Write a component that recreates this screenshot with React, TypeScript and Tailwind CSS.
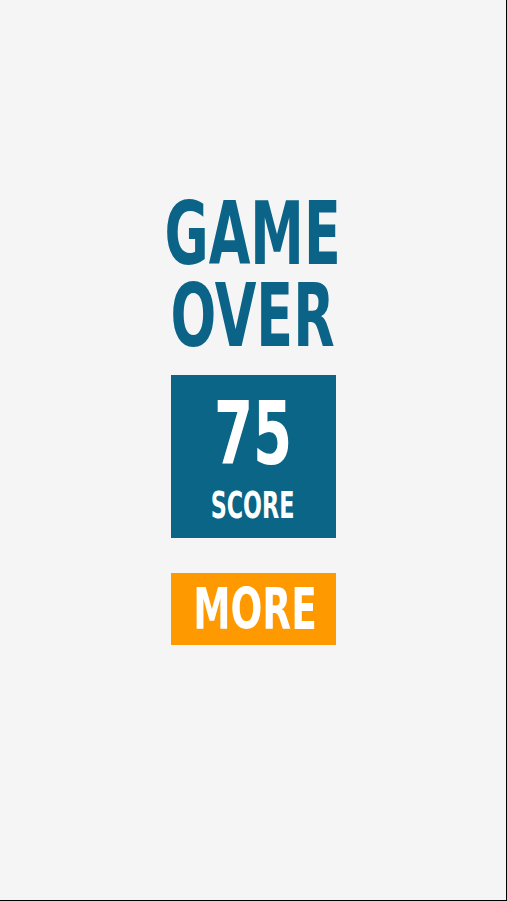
export default function App() {
  return (
    <div className="flex h-[901px] w-[507px] flex-col items-center border-r border-b border-black bg-[#f5f5f5] pt-[193px] font-['DejaVu_Sans_Condensed','DejaVu_Sans',sans-serif] font-bold">
      <h1 className="text-center text-[88px] leading-[82px] text-[#0b6487]">
        <div className="scale-x-[0.68]">GAME</div>
        <div className="scale-x-[0.68]">OVER</div>
      </h1>
      <div className="mt-[18px] flex h-[163px] w-[165px] flex-col items-center bg-[#0a6587] text-white">
        <div className="mt-[14px] scale-x-[0.71] text-[88px] leading-[90px]">75</div>
        <div className="mt-[7px] scale-x-[0.67] text-[37px] leading-[40px]">SCORE</div>
      </div>
      <button className="mt-[35px] h-[72px] w-[165px] bg-[#ff9900] text-white">
        <span className="block scale-x-[0.73] text-[57px] leading-[72px]">MORE</span>
      </button>
    </div>
  );
}
